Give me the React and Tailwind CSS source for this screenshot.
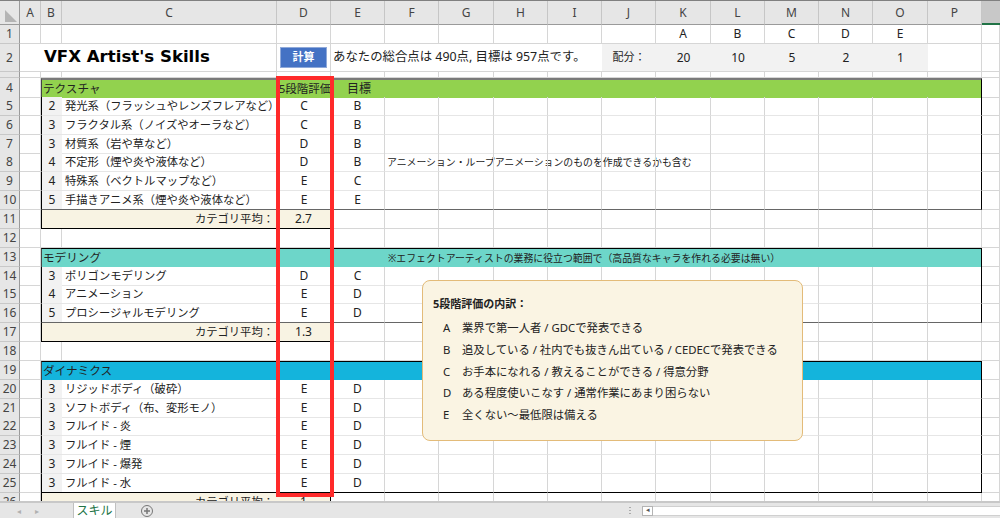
import React from "react";

const GRID =
  "grid grid-cols-[20px_21px_21px_215px_54px_54px_54px_55px_54px_54px_54px_55px_54px_54px_54px_55px_54px_18px]";
const LETTERS = ["A", "B", "C", "D", "E", "F", "G", "H", "I", "J", "K", "L", "M", "N", "O", "P"];
const LINE = "border-r border-b border-[#d6d6d6]";
const H19 = "h-[19px]";
const H18 = "h-[18px]";

const textureRows = [
  { n: 5, lv: 2, name: "発光系（フラッシュやレンズフレアなど）", d: "C", e: "B" },
  { n: 6, lv: 3, name: "フラクタル系（ノイズやオーラなど）", d: "C", e: "B" },
  { n: 7, lv: 3, name: "材質系（岩や草など）", d: "D", e: "B", h: H18 },
  { n: 8, lv: 4, name: "不定形（煙や炎や液体など）", d: "D", e: "B", note: "アニメーション・ループアニメーションのものを作成できるかも含む" },
  { n: 9, lv: 4, name: "特殊系（ベクトルマップなど）", d: "E", e: "C" },
  { n: 10, lv: 5, name: "手描きアニメ系（煙や炎や液体など）", d: "E", e: "E", last: true },
];
const modelRows = [
  { n: 14, lv: 3, name: "ポリゴンモデリング", d: "D", e: "C", h: H18 },
  { n: 15, lv: 4, name: "アニメーション", d: "E", e: "D" },
  { n: 16, lv: 5, name: "プロシージャルモデリング", d: "E", e: "D", last: true },
];
const dynamicsRows = [
  { n: 20, lv: 3, name: "リジッドボディ（破砕）", d: "E", e: "D" },
  { n: 21, lv: 3, name: "ソフトボディ（布、変形モノ）", d: "E", e: "D", h: H18 },
  { n: 22, lv: 3, name: "フルイド - 炎", d: "E", e: "D" },
  { n: 23, lv: 3, name: "フルイド - 煙", d: "E", e: "D" },
  { n: 24, lv: 3, name: "フルイド - 爆発", d: "E", e: "D" },
  { n: 25, lv: 3, name: "フルイド - 水", d: "E", e: "D", last: true, black: true },
];
const legend = [
  ["A", "業界で第一人者 / GDCで発表できる"],
  ["B", "追及している / 社内でも抜きん出ている / CEDECで発表できる"],
  ["C", "お手本になれる / 教えることができる / 得意分野"],
  ["D", "ある程度使いこなす / 通常作業にあまり困らない"],
  ["E", "全くない～最低限は備える"],
];

function Row({ n, h = H19, children }) {
  return (
    <div className={`${GRID} ${h}`}>
      <div className="flex items-center justify-center border-r border-b border-r-[#9a9a9a] border-b-[#c8c8c8] bg-[#e6e6e6] text-[12px] text-[#444]">
        {n}
      </div>
      {children}
    </div>
  );
}

function Blank({ className = "" }) {
  return <div className={`${LINE} ${className}`} />;
}

function Blanks({ from, to }) {
  return Array.from({ length: to - from }, (_, i) => <Blank key={i} />);
}

// one graded skill line inside a boxed section
function SkillRow({ row }) {
  const bottom = row.black ? "border-b-black" : row.last ? "border-b-[#666]" : "border-b-[#e6e6e6]";
  return (
    <Row n={row.n} h={row.h}>
      <Blank />
      <div className={`flex items-center justify-center border-l border-b border-l-black bg-[#f2f2f2] ${bottom}`}>{row.lv}</div>
      <div className={`flex items-center whitespace-nowrap border-b pl-[3px] text-[11.3px] ${bottom}`}>{row.name}</div>
      <div className={`flex items-center justify-center border-b ${bottom}`}>{row.d}</div>
      <div className={`flex items-center justify-center border-r border-b border-r-[#d6d6d6] ${bottom}`}>{row.e}</div>
      <div className={`flex items-center whitespace-nowrap border-r border-b border-r-[#d6d6d6] pl-[2px] text-[9.9px] ${bottom}`}>{row.note}</div>
      {Array.from({ length: 9 }, (_, i) => (
        <div key={i} className={`border-r border-b border-r-[#d6d6d6] ${bottom}`} />
      ))}
      <div className={`border-r border-b border-r-black ${bottom}`} />
      <Blank />
    </Row>
  );
}

function SectionHead({ n, label, color, h, topGray, note, target }) {
  const top = topGray ? "border-t-2 border-t-[#7a7a7a]" : "border-t border-t-black";
  return (
    <Row n={n} h={h}>
      <Blank />
      <div className={`col-span-15 grid grid-cols-[21px_215px_54px_54px_1fr] ${color} ${top} border-x border-x-black border-l-[#444]`}>
        <div className="col-span-2 flex items-center whitespace-nowrap pl-[1px] text-[11.6px]">{label}</div>
        <div className="flex items-center justify-center whitespace-nowrap text-[11.5px]">{target && "5段階評価"}</div>
        <div className="flex items-center justify-center whitespace-nowrap text-[12px]">{target && "目標"}</div>
        <div className="flex items-center whitespace-nowrap pl-[2px] text-[9.9px]">{note}</div>
      </div>
      <Blank />
    </Row>
  );
}

function AverageRow({ n, value, h }) {
  return (
    <Row n={n} h={h}>
      <Blank />
      <div className="col-span-2 flex items-center justify-end whitespace-nowrap border-x border-b border-l-black border-r-[#f8f3e3] border-b-black bg-[#f8f3e3] pr-[2px] text-[11.3px]">
        カテゴリ平均：
      </div>
      <div className="flex items-center justify-center border-r border-b border-black bg-[#f8f3e3]">{value}</div>
      <Blanks from={0} to={13} />
    </Row>
  );
}

export default function App() {
  return (
    <div className="relative flex h-[518px] w-[1000px] flex-col overflow-hidden border-t border-[#808080] bg-white font-['Noto_Sans','Noto_Sans_CJK_JP',sans-serif] text-[12px] text-[#222]">
      <div className="flex-1 overflow-hidden">
        {/* column headers */}
        <div className={`${GRID} h-[24px] bg-[#e6e6e6] text-[12px] text-[#444]`}>
          <div className="flex items-end justify-end border-r border-b border-r-[#9a9a9a] border-b-[#9a9a9a] p-[2px]">
            <div className="h-0 w-0 border-t-[12px] border-l-[12px] border-t-transparent border-l-[#b4b4b4]" />
          </div>
          {LETTERS.map((l) => (
            <div key={l} className="flex items-center justify-center border-r border-b border-r-[#c6c6c6] border-b-[#9a9a9a]">
              {l}
            </div>
          ))}
          <div className="border-b-2 border-b-[#217346] bg-[#c8c8c8]" />
        </div>

        <Row n={1}>
          <Blank />
          <Blank />
          <Blank />
          <Blanks from={0} to={7} />
          {["A", "B", "C", "D", "E"].map((l) => (
            <div key={l} className={`flex items-center justify-center ${LINE}`}>{l}</div>
          ))}
          <Blank />
          <Blank />
        </Row>

        <Row n={2} h="h-[28px]">
          <div className="border-b border-[#d6d6d6]" />
          <div className="col-span-2 flex items-center whitespace-nowrap border-r border-b border-[#d6d6d6] pl-[3px] font-['DejaVu_Sans','Noto_Sans_CJK_JP',sans-serif] text-[16.6px] font-bold text-black">
            VFX Artist's Skills
          </div>
          <div className="flex items-center justify-center border-r border-b border-[#d6d6d6]">
            <div className="flex h-[21px] w-[47px] items-center justify-center border border-[#8fa9d9] bg-[#4472c4] text-[11px] font-bold text-white">
              計算
            </div>
          </div>
          <div className="col-span-5 flex items-center whitespace-nowrap border-b border-[#d6d6d6] pl-[2px] text-[12.4px]">
            あなたの総合点は 490点, 目標は 957点です。
          </div>
          <div className="col-span-6 grid grid-cols-[54px_55px_54px_54px_54px_55px] border-b border-[#d6d6d6] bg-[#f2f2f2]">
            <div className="flex items-center justify-center text-[11px]">配分：</div>
            {[20, 10, 5, 2, 1].map((v) => (
              <div key={v} className="flex items-center justify-center">{v}</div>
            ))}
          </div>
          <Blank />
          <Blank />
        </Row>

        <Row n="" h="h-[6px]">
          <Blanks from={0} to={17} />
        </Row>

        <SectionHead n={4} label="テクスチャ" color="bg-[#92d24e]" topGray target />
        {textureRows.map((r) => <SkillRow key={r.n} row={r} />)}
        <AverageRow n={11} value="2.7" />
        <Row n={12}>
          <Blanks from={0} to={17} />
        </Row>

        <SectionHead
          n={13}
          label="モデリング"
          color="bg-[#6dd6c9]"
          note="※エフェクトアーティストの業務に役立つ範囲で（高品質なキャラを作れる必要は無い）"
        />
        {modelRows.map((r) => <SkillRow key={r.n} row={r} />)}
        <AverageRow n={17} value="1.3" />
        <Row n={18}>
          <Blanks from={0} to={17} />
        </Row>

        <SectionHead n={19} label="ダイナミクス" color="bg-[#14b4dc]" />
        {dynamicsRows.map((r) => <SkillRow key={r.n} row={r} />)}
        <AverageRow n={26} value="1" />
      </div>

      {/* sheet tab bar */}
      <div className="flex h-[17px] shrink-0 items-stretch border-t-2 border-[#c8c8c8] bg-[#e6e6e6] text-[#b0b0b0]">
        <div className="flex w-[73px] items-center gap-[14px] pl-[17px] text-[8px]">
          <span>◂</span>
          <span>▸</span>
        </div>
        <div className="flex w-[43px] items-center justify-center border-x border-[#c0c0c0] bg-white text-[12px] text-[#217346]">
          スキル
        </div>
        <div className="ml-[24px] flex items-center">
          <svg width="14" height="14" viewBox="0 0 14 14" fill="none" stroke="#777">
            <circle cx="7" cy="7" r="5.5" />
            <path d="M7 4v6M4 7h6" strokeWidth="1.5" />
          </svg>
        </div>
        <div className="ml-auto flex w-[372px] items-center">
          <div className="ml-[1px] flex w-[12px] flex-col gap-[2px]">
            <span className="h-[1px] w-[2px] bg-[#aaa]" />
            <span className="h-[1px] w-[2px] bg-[#aaa]" />
            <span className="h-[1px] w-[2px] bg-[#aaa]" />
          </div>
          <div className="ml-[1px] flex h-[10px] w-[11px] items-center justify-center border border-[#b4b4b4] bg-white text-[7px] text-[#555]">◂</div>
          <div className="h-[10px] flex-1 border-y border-[#d0d0d0] bg-white" />
        </div>
      </div>

      {/* red highlight around the grade column */}
      <div className="absolute top-[75px] left-[276px] h-[421px] w-[58px] border-[4px] border-[#ff2a2a]" />

      {/* legend callout */}
      <div className="absolute top-[279px] left-[422px] h-[161px] w-[381px] rounded-lg border border-[#e3bb79] bg-[#faf4e3] pt-[15px] pl-[10px] text-[11.35px] text-[#222]">
        <div className="mb-[3px] h-[18px] text-[11px] font-bold">5段階評価の内訳：</div>
        {legend.map(([k, v]) => (
          <div key={k} className="flex h-[21.7px] items-center whitespace-nowrap">
            <span className="w-[29px] pl-[10px]">{k}</span>
            <span>{v}</span>
          </div>
        ))}
      </div>
    </div>
  );
}
